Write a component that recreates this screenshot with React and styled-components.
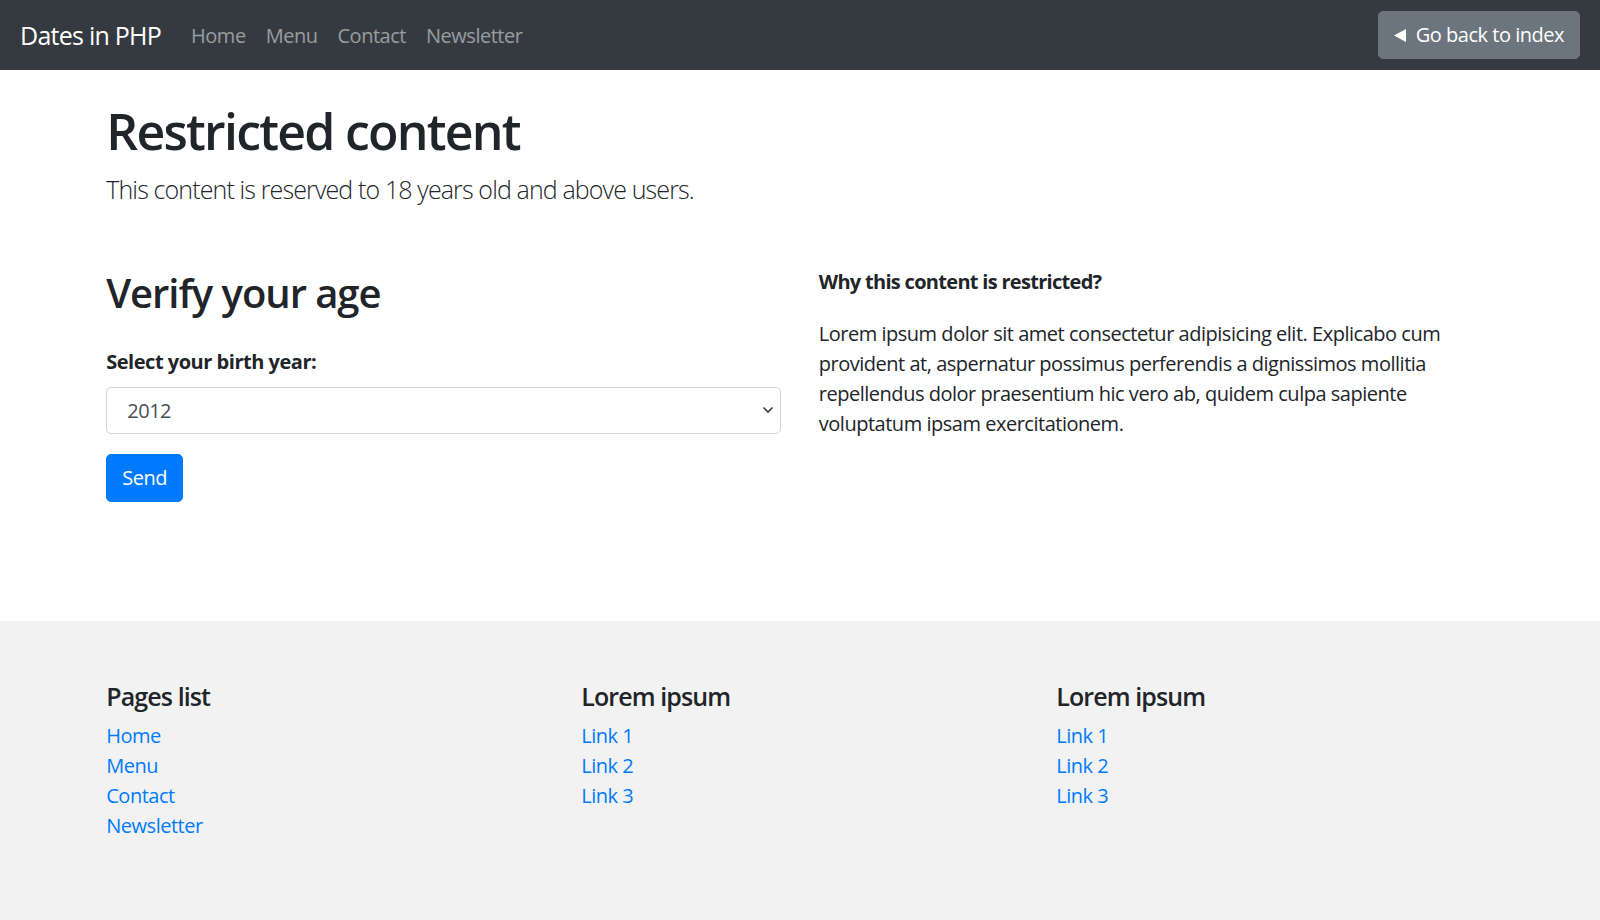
import styled, { createGlobalStyle } from 'styled-components';

const GlobalStyle = createGlobalStyle`
  html, body, #root {
    margin: 0;
    min-height: 100%;
  }
  body {
    font-family: "Open Sans", "Noto Sans", sans-serif;
    letter-spacing: -0.48px;
    color: #212529;
    background: #fff;
  }
  * {
    box-sizing: border-box;
  }
`;

const Page = styled.div`
  min-height: 100vh;
  display: flex;
  flex-direction: column;
`;

const Navbar = styled.nav`
  height: 70px;
  background: #343a40;
  display: flex;
  align-items: center;
  justify-content: space-between;
  padding: 0 20px;
`;

const NavLeft = styled.div`
  display: flex;
  align-items: center;
  padding-top: 2px;
`;

const Brand = styled.a`
  font-size: 25px;
  line-height: 37.5px;
  letter-spacing: -0.75px;
  color: #fff;
  text-decoration: none;
  margin-right: 20px;
`;

const NavLink = styled.a`
  font-size: 20px;
  line-height: 30px;
  padding: 0 10px;
  color: rgba(255, 255, 255, 0.5);
  text-decoration: none;
`;

const Button = styled.button`
  display: inline-flex;
  align-items: center;
  gap: 10px;
  height: 47.5px;
  padding: 0 15px;
  font-family: inherit;
  letter-spacing: inherit;
  font-size: 20px;
  line-height: 30px;
  color: #fff;
  background: ${(p) => (p.$variant === 'primary' ? '#007bff' : '#6c757d')};
  border: 1.25px solid ${(p) => (p.$variant === 'primary' ? '#007bff' : '#6c757d')};
  border-radius: 5px;
  cursor: pointer;
`;

const Container = styled.div`
  width: 100%;
  max-width: 1425px;
  margin: 0 auto;
  padding: 0 18.75px;
`;

const Main = styled.main`
  padding: 30px 0 119px;
`;

const Title = styled.h1`
  font-size: 50px;
  font-weight: 600;
  letter-spacing: -1.75px;
  line-height: 1.2;
  margin: 0 0 10px;
  padding-top: 1px;
`;

const Lead = styled.p`
  font-size: 25px;
  font-weight: 300;
  letter-spacing: -0.875px;
  line-height: 1.5;
  margin: 0;
`;

const Row = styled.div`
  display: grid;
  grid-template-columns: 1fr 1fr;
  column-gap: 37.5px;
  margin-top: 60px;
`;

const Column = styled.div`
  padding-top: ${(p) => p.$offset || 0}px;
`;

const SectionTitle = styled.h2`
  font-size: 40px;
  font-weight: 600;
  letter-spacing: -1.05px;
  line-height: 1.2;
  margin: 0 0 30px;
`;

const FormGroup = styled.div`
  margin-bottom: 20px;
`;

const Label = styled.label`
  display: block;
  font-size: 20px;
  font-weight: 700;
  line-height: 30px;
  margin-bottom: 10px;
`;

const SelectWrap = styled.div`
  position: relative;
`;

const Select = styled.select`
  appearance: none;
  width: 100%;
  height: 47.5px;
  padding: 0 40px 0 20px;
  font-family: inherit;
  letter-spacing: inherit;
  font-size: 20px;
  color: #495057;
  background: #fff;
  border: 1.25px solid #ced4da;
  border-radius: 5px;
`;

const Chevron = styled.svg`
  position: absolute;
  right: 7px;
  top: 50%;
  transform: translateY(-50%);
  pointer-events: none;
`;

const AsideTitle = styled.h6`
  font-size: 20px;
  font-weight: 700;
  letter-spacing: -0.7px;
  line-height: 24px;
  margin: 0 0 25px;
`;

const Text = styled.p`
  font-size: 20px;
  line-height: 30px;
  margin: 0 0 20px;
`;

const Footer = styled.footer`
  flex: 1;
  background: #f2f2f2;
  padding: 60px 0;
`;

const FooterGrid = styled.div`
  display: grid;
  grid-template-columns: repeat(3, 1fr);
  column-gap: 37.5px;
`;

const FooterTitle = styled.h5`
  font-size: 25px;
  font-weight: 600;
  letter-spacing: -0.9px;
  line-height: 30px;
  margin: 0 0 10px;
`;

const LinkList = styled.ul`
  list-style: none;
  margin: 0;
  padding: 0;
`;

const FooterLink = styled.a`
  display: block;
  font-size: 20px;
  line-height: 30px;
  color: #007bff;
  text-decoration: none;
`;

const years = [];
for (let y = 2012; y >= 1920; y--) years.push(y);

const footerCols = [
  { title: 'Pages list', links: ['Home', 'Menu', 'Contact', 'Newsletter'] },
  { title: 'Lorem ipsum', links: ['Link 1', 'Link 2', 'Link 3'] },
  { title: 'Lorem ipsum', links: ['Link 1', 'Link 2', 'Link 3'] },
];

export default function App() {
  return (
    <Page>
      <GlobalStyle />
      <Navbar>
        <NavLeft>
          <Brand href="#">Dates in PHP</Brand>
          <NavLink href="#">Home</NavLink>
          <NavLink href="#">Menu</NavLink>
          <NavLink href="#">Contact</NavLink>
          <NavLink href="#">Newsletter</NavLink>
        </NavLeft>
        <Button>
          <svg width="12" height="13" viewBox="0 0 12 13">
            <path d="M0 6.5 L12 0 L12 13 Z" fill="#fff" />
          </svg>
          Go back to index
        </Button>
      </Navbar>

      <Main>
        <Container>
          <Title>Restricted content</Title>
          <Lead>This content is reserved to 18 years old and above users.</Lead>
          <Row>
            <Column>
              <SectionTitle>Verify your age</SectionTitle>
              <FormGroup>
                <Label htmlFor="year">Select your birth year:</Label>
                <SelectWrap>
                  <Select id="year" defaultValue="2012">
                    {years.map((y) => (
                      <option key={y} value={y}>{y}</option>
                    ))}
                  </Select>
                  <Chevron width="12" height="8" viewBox="0 0 12 8">
                    <path d="M1.5 1.5 L6 6 L10.5 1.5" fill="none" stroke="#343a40" strokeWidth="1.6" />
                  </Chevron>
                </SelectWrap>
              </FormGroup>
              <Button $variant="primary">Send</Button>
            </Column>
            <Column $offset={1.5}>
              <AsideTitle>Why this content is restricted?</AsideTitle>
              <Text>
                Lorem ipsum dolor sit amet consectetur adipisicing elit. Explicabo cum provident at,
                aspernatur possimus perferendis a dignissimos mollitia repellendus dolor praesentium
                hic vero ab, quidem culpa sapiente voluptatum ipsam exercitationem.
              </Text>
            </Column>
          </Row>
        </Container>
      </Main>

      <Footer>
        <Container>
          <FooterGrid>
            {footerCols.map((col, i) => (
              <div key={i}>
                <FooterTitle>{col.title}</FooterTitle>
                <LinkList>
                  {col.links.map((l) => (
                    <li key={l}>
                      <FooterLink href="#">{l}</FooterLink>
                    </li>
                  ))}
                </LinkList>
              </div>
            ))}
          </FooterGrid>
        </Container>
      </Footer>
    </Page>
  );
}
